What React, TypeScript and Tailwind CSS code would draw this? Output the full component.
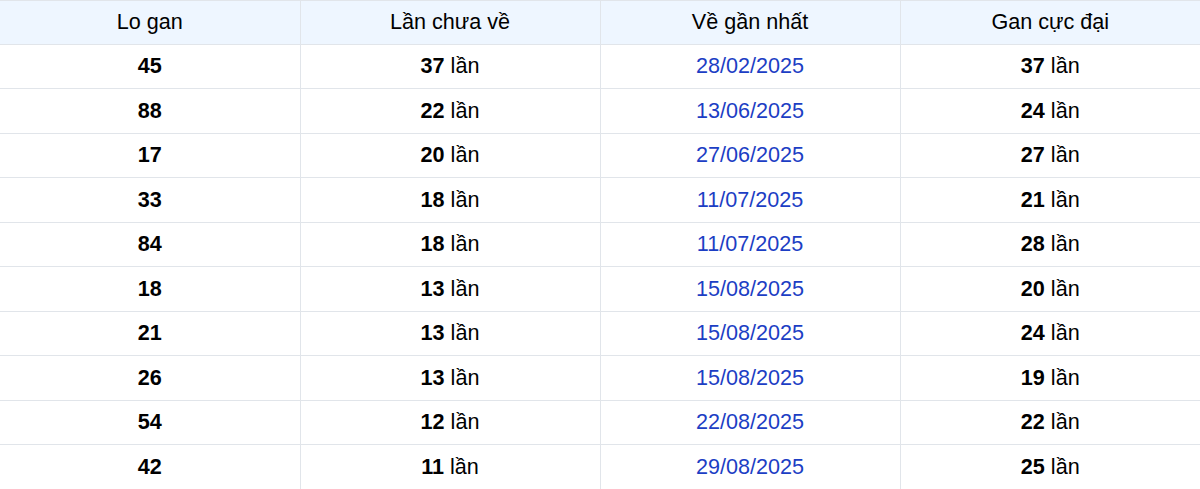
const rows = [
  { lo: "45", chua: "37", ve: "28/02/2025", max: "37" },
  { lo: "88", chua: "22", ve: "13/06/2025", max: "24" },
  { lo: "17", chua: "20", ve: "27/06/2025", max: "27" },
  { lo: "33", chua: "18", ve: "11/07/2025", max: "21" },
  { lo: "84", chua: "18", ve: "11/07/2025", max: "28" },
  { lo: "18", chua: "13", ve: "15/08/2025", max: "20" },
  { lo: "21", chua: "13", ve: "15/08/2025", max: "24" },
  { lo: "26", chua: "13", ve: "15/08/2025", max: "19" },
  { lo: "54", chua: "12", ve: "22/08/2025", max: "22" },
  { lo: "42", chua: "11", ve: "29/08/2025", max: "25" },
];

export default function App() {
  return (
    <div className="w-[1200px] bg-white" style={{ fontFamily: '"Liberation Sans", Arial, sans-serif' }}>
      <table className="w-full border-collapse table-fixed text-[21.6px] text-black">
        <thead>
          <tr className="bg-[#eef6ff] h-[43.5px]">
            <th className="font-normal border-[1.5px] border-[#e1e5ea] border-l-0">Lo gan</th>
            <th className="font-normal border-[1.5px] border-[#e1e5ea]">Lần chưa về</th>
            <th className="font-normal border-[1.5px] border-[#e1e5ea]">Về gần nhất</th>
            <th className="font-normal border-[1.5px] border-[#e1e5ea] border-r-0">Gan cực đại</th>
          </tr>
        </thead>
        <tbody>
          {rows.map((r, i) => (
            <tr key={i} className="h-[44.5px]">
              <td className="text-center font-bold border-[1.5px] border-[#e1e5ea] border-l-0">{r.lo}</td>
              <td className="text-center border-[1.5px] border-[#e1e5ea]">
                <b>{r.chua}</b> lần
              </td>
              <td className="text-center text-[#1c3ec4] border-[1.5px] border-[#e1e5ea]">{r.ve}</td>
              <td className="text-center border-[1.5px] border-[#e1e5ea] border-r-0">
                <b>{r.max}</b> lần
              </td>
            </tr>
          ))}
        </tbody>
      </table>
    </div>
  );
}
